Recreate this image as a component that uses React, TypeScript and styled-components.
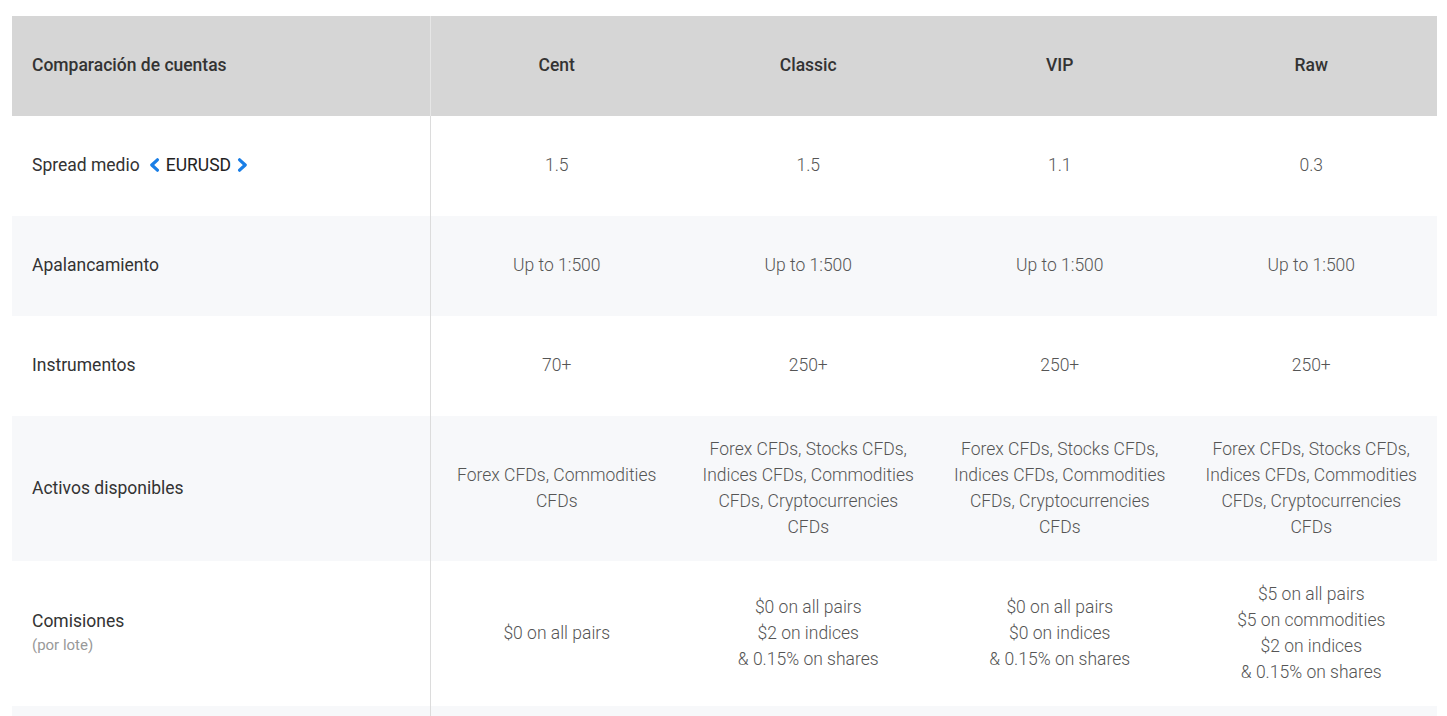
import React from "react";
import styled, { createGlobalStyle } from "styled-components";

const Global = createGlobalStyle`
  html, body { margin: 0; padding: 0; background: #fff; }
  body { font-family: Roboto, "Liberation Sans", Arial, sans-serif; }
`;

const Page = styled.div`
  padding: 16px 10px 0 12px;
  height: 716px;
  box-sizing: border-box;
  overflow: hidden;
`;

const Table = styled.div`
  display: flex;
  flex-direction: column;
  width: 1425px;
`;

const Row = styled.div<{ $bg: string; $h: number }>`
  display: grid;
  grid-template-columns: 419px repeat(4, 1fr);
  height: ${(p) => p.$h}px;
  background: ${(p) => p.$bg};
`;

const LabelCell = styled.div<{ $header?: boolean }>`
  display: flex;
  flex-direction: column;
  justify-content: center;
  padding: 0 0 2px 20px;
  border-right: 1px solid ${(p) => (p.$header ? "#e6e6e6" : "#dcdcdc")};
  font-size: 17.5px;
  line-height: 24px;
  color: #333;
  font-weight: ${(p) => (p.$header ? 500 : 400)};
`;

const Cell = styled.div<{ $header?: boolean }>`
  display: flex;
  align-items: center;
  justify-content: center;
  text-align: center;
  font-size: 17.5px;
  line-height: 26px;
  padding: 0 8px 2px;
  color: ${(p) => (p.$header ? "#333" : "#555")};
  font-weight: ${(p) => (p.$header ? 500 : 300)};
`;

const Sub = styled.span`
  font-size: 15px;
  color: #999;
  line-height: 24px;
`;

const Spread = styled.span`
  display: inline-flex;
  align-items: center;
`;

const Pair = styled.span`
  display: inline-flex;
  align-items: center;
  margin-left: 9px;
  color: #222;
  gap: 6px;
`;

const Chevron = ({ dir }: { dir: "l" | "r" }) => (
  <svg width="11" height="14" viewBox="0 0 11 14">
    <path
      d={dir === "l" ? "M8.4 1.8 L2.8 7 L8.4 12.2" : "M2.6 1.8 L8.2 7 L2.6 12.2"}
      fill="none"
      stroke="#1a7ee6"
      strokeWidth="3.2"
      strokeLinecap="round"
      strokeLinejoin="round"
    />
  </svg>
);

const cols = ["Cent", "Classic", "VIP", "Raw"];

const Lines = ({ lines }: { lines: string[] }) => (
  <div>
    {lines.map((l, i) => (
      <div key={i}>{l}</div>
    ))}
  </div>
);

export default function App() {
  return (
    <Page>
      <Global />
      <Table>
        <Row $bg="#d6d6d6" $h={100}>
          <LabelCell $header>Comparación de cuentas</LabelCell>
          {cols.map((c) => (
            <Cell $header key={c}>{c}</Cell>
          ))}
        </Row>
        <Row $bg="#fff" $h={100}>
          <LabelCell>
            <Spread>
              Spread medio
              <Pair>
                <Chevron dir="l" />
                EURUSD
                <Chevron dir="r" />
              </Pair>
            </Spread>
          </LabelCell>
          {["1.5", "1.5", "1.1", "0.3"].map((v, i) => (
            <Cell key={i}>{v}</Cell>
          ))}
        </Row>
        <Row $bg="#f7f8fa" $h={100}>
          <LabelCell>Apalancamiento</LabelCell>
          {cols.map((c) => (
            <Cell key={c}>Up to 1:500</Cell>
          ))}
        </Row>
        <Row $bg="#fff" $h={100}>
          <LabelCell>Instrumentos</LabelCell>
          {["70+", "250+", "250+", "250+"].map((v, i) => (
            <Cell key={i}>{v}</Cell>
          ))}
        </Row>
        <Row $bg="#f7f8fa" $h={145}>
          <LabelCell>Activos disponibles</LabelCell>
          <Cell>
            <Lines lines={["Forex CFDs, Commodities", "CFDs"]} />
          </Cell>
          {[0, 1, 2].map((i) => (
            <Cell key={i}>
              <Lines
                lines={["Forex CFDs, Stocks CFDs,", "Indices CFDs, Commodities", "CFDs, Cryptocurrencies", "CFDs"]}
              />
            </Cell>
          ))}
        </Row>
        <Row $bg="#fff" $h={145}>
          <LabelCell>
            <span>Comisiones</span>
            <Sub>(por lote)</Sub>
          </LabelCell>
          <Cell>$0 on all pairs</Cell>
          <Cell>
            <Lines lines={["$0 on all pairs", "$2 on indices", "& 0.15% on shares"]} />
          </Cell>
          <Cell>
            <Lines lines={["$0 on all pairs", "$0 on indices", "& 0.15% on shares"]} />
          </Cell>
          <Cell>
            <Lines lines={["$5 on all pairs", "$5 on commodities", "$2 on indices", "& 0.15% on shares"]} />
          </Cell>
        </Row>
        <Row $bg="#f7f8fa" $h={100}>
          <LabelCell />
          <Cell />
          <Cell />
          <Cell />
          <Cell />
        </Row>
      </Table>
    </Page>
  );
}
